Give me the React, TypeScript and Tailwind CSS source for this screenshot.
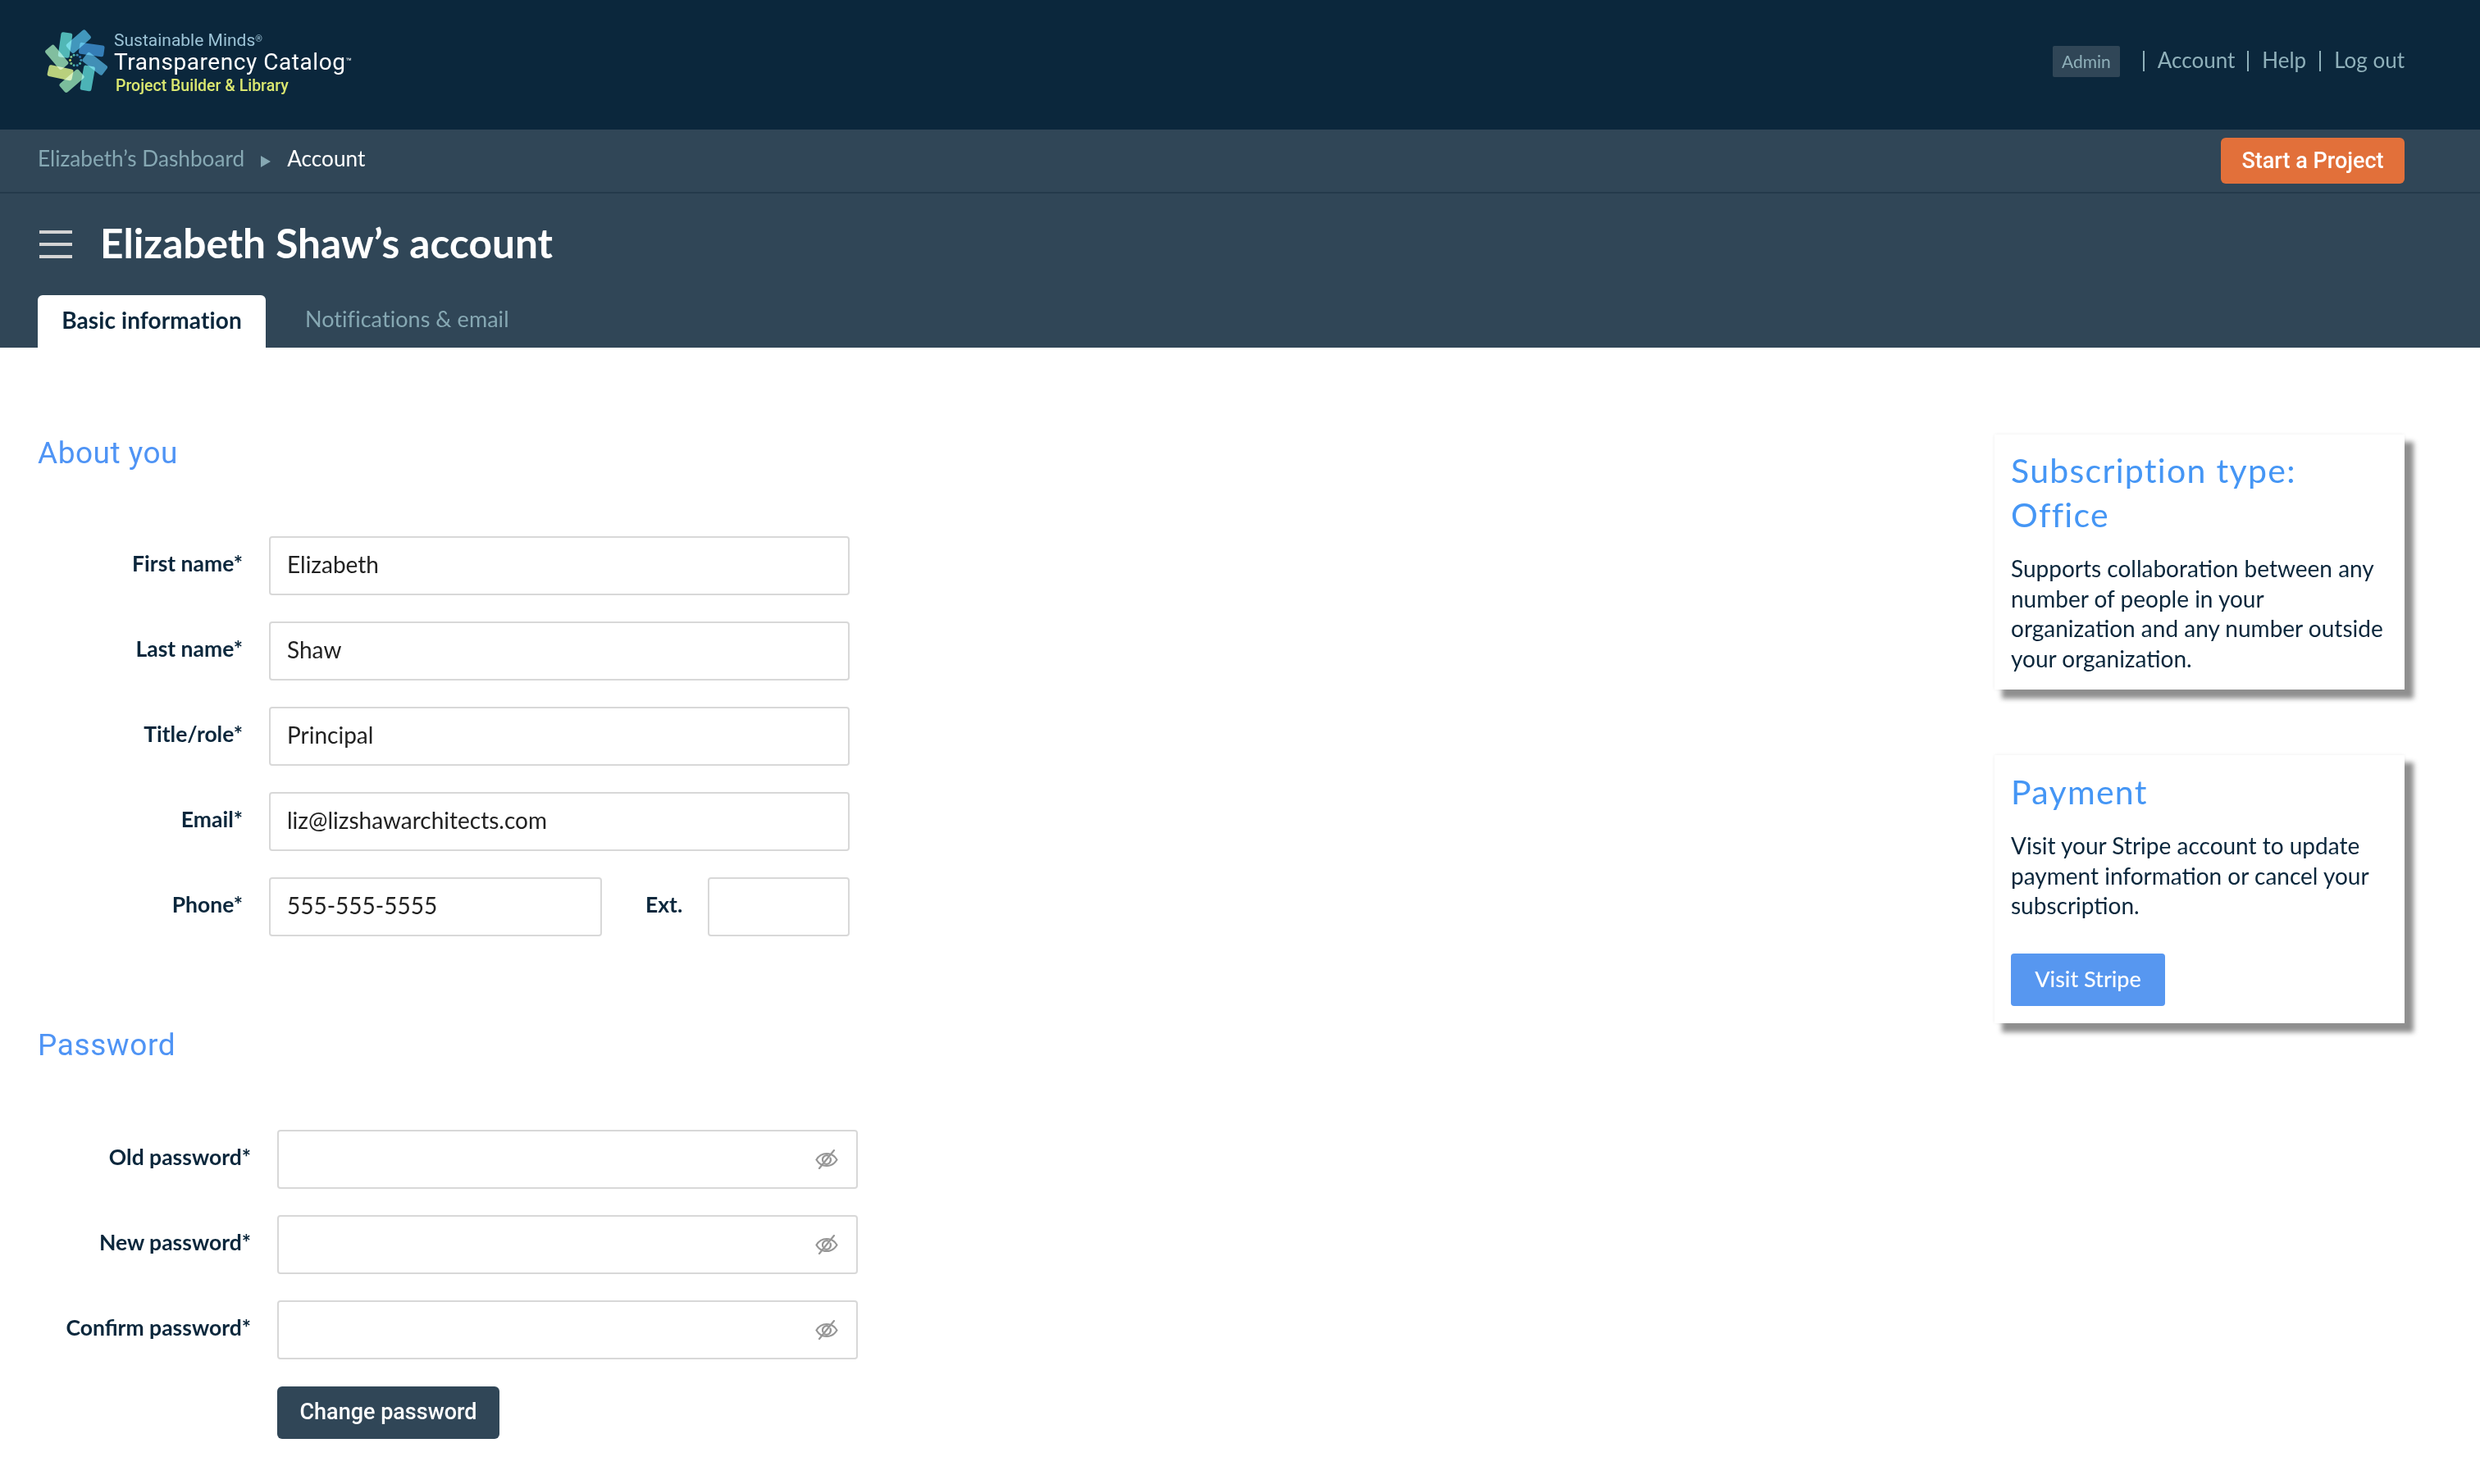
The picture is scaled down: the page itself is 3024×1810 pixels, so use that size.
import type { ReactNode } from 'react';

const petals = [
  { x: 143, y: 103, r: 8, fill: '#4fb8ad' },
  { x: 192, y: 90, r: 49, fill: '#3f8fb5' },
  { x: 240, y: 120, r: 98, fill: '#2f6fae' },
  { x: 252, y: 172, r: 128, fill: '#3d86ad' },
  { x: 225, y: 225, r: 10, fill: '#4ab3ae' },
  { x: 167, y: 235, r: 49, fill: '#7fc088' },
  { x: 125, y: 205, r: 102, fill: '#c6d95c' },
  { x: 112, y: 148, r: -40, fill: '#86c18c' },
];

const dots = ['#3f8fb5', '#4fb8ad', '#3f8fb5', '#4ab3ae', '#7fc088', '#c6d95c', '#86c18c', '#4fb8ad', '#3d86ad', '#2f6fae'];

function Logo() {
  return (
    <svg viewBox="60 40 250 250" className="h-[83px] w-[83px] shrink-0">
      {petals.map((p, i) => (
        <rect
          key={i}
          x={p.x - 21}
          y={p.y - 46}
          width={42}
          height={92}
          rx={8}
          fill={p.fill}
          fillOpacity={0.92}
          className="mix-blend-screen"
          transform={`rotate(${p.r} ${p.x} ${p.y})`}
        />
      ))}
      {dots.map((fill, i) => {
        const a = (i / dots.length) * Math.PI * 2;
        return <circle key={i} cx={181 + Math.cos(a) * 20} cy={159 + Math.sin(a) * 20} r={4.500} fill={fill} />;
      })}
    </svg>
  );
}

function EyeOff() {
  return (
    <svg viewBox="0 0 28 24" className="h-[24px] w-[28px]" fill="none" stroke="#969696" strokeWidth="2.2" strokeLinecap="round">
      <path d="M1.500 12.500C4.500 7.500 9 5 14 5s9.500 2.500 12.500 7.500C23.500 17.500 19 20 14 20S4.500 17.500 1.500 12.500Z" />
      <path d="M9.500 14.500a5.200 5.200 0 0 1 6.500-7M18.500 10.500a5.200 5.200 0 0 1-6.500 7" />
      <path d="M23 1 5 23" />
    </svg>
  );
}

function Label({ children, width }: { children: ReactNode; width: string }) {
  return (
    <label className={`${width} shrink-0 pb-[6px] text-right text-[26.500px] leading-[30px] font-bold text-[#0b273c]`}>
      {children}
    </label>
  );
}

function TextRow({ label, value }: { label: string; value: string }) {
  return (
    <div className="flex items-center gap-[32px]">
      <Label width="w-[296px]">{label}</Label>
      <input
        readOnly
        value={value}
        className="h-[72px] w-[708px] rounded-[4px] border-2 border-[#d8d8d8] px-[20px] pb-[5px] text-[28px] text-[#222] outline-none"
      />
    </div>
  );
}

function PasswordRow({ label }: { label: string }) {
  return (
    <div className="flex items-center gap-[32px]">
      <Label width="w-[306px]">{label}</Label>
      <div className="flex h-[72px] w-[708px] items-center justify-end rounded-[4px] border-2 border-[#d8d8d8] pr-[22px]">
        <EyeOff />
      </div>
    </div>
  );
}

export default function App() {
  return (
    <div className="min-h-[1810px] bg-white [font-family:Lato,sans-serif] text-[#0b273c]">
      <header className="flex h-[158px] items-start justify-between bg-[#0b273c] pr-[92px] pl-[52px]">
        <div className="flex items-start gap-[4px] pt-[34px]">
          <Logo />
          <div className="pt-[3px] [font-family:Roboto,sans-serif]">
            <div className="text-[21px] leading-[24px] text-[#9cc3d6]">
              Sustainable Minds<sup className="text-[11px]">®</sup>
            </div>
            <div className="text-[28px] leading-[30px] tracking-[0.55px] text-white">
              Transparency Catalog<sup className="text-[12px]">™</sup>
            </div>
            <div className="pl-[2px] text-[19.500px] leading-[27px] font-medium text-[#dbe870]">Project Builder &amp; Library</div>
          </div>
        </div>
        <nav className="flex items-center pt-[54px] text-[26px] text-[#8fb0ba]">
          <span className="flex h-[38px] w-[82px] items-center justify-center rounded-[2px] bg-[#304657] text-[21px]">Admin</span>
          <span className="ml-[28px] h-[25px] w-[2px] bg-[#8fb0ba]" />
          <span className="ml-[16px] pb-[2px]">Account</span>
          <span className="ml-[15px] h-[25px] w-[2px] bg-[#8fb0ba]" />
          <span className="ml-[16px] pb-[2px]">Help</span>
          <span className="ml-[16px] h-[25px] w-[2px] bg-[#8fb0ba]" />
          <span className="ml-[16px] pb-[2px]">Log out</span>
        </nav>
      </header>

      <div className="h-[266px] bg-[#304657]">
        <div className="flex h-[78px] items-center justify-between border-b-2 border-[#243a4b] pr-[92px] pl-[46px]">
          <div className="flex items-center pb-[5px] text-[26.200px] text-[#86a8b3]">
            Elizabeth’s Dashboard
            <span className="mt-[8px] mr-[20px] ml-[20px] h-0 w-0 border-y-[7px] border-l-[12px] border-y-transparent border-l-[#86a8b3]" />
            <span className="text-white">Account</span>
          </div>
          <button className="h-[56px] w-[224px] rounded-[6px] bg-[#e2703a] text-[27px] font-medium text-white [font-family:Roboto,sans-serif]">
            Start a Project
          </button>
        </div>
        <div className="flex items-center pt-[45px] pl-[48px]">
          <div className="flex w-[40px] flex-col gap-[11px]">
            <span className="h-[4px] bg-[#d4d4d4]" />
            <span className="h-[4px] bg-[#d4d4d4]" />
            <span className="h-[4px] bg-[#d4d4d4]" />
          </div>
          <h1 className="ml-[34px] pb-[4px] text-[49.600px] leading-[30px] font-bold text-white">Elizabeth Shaw’s account</h1>
        </div>
        <div className="mt-[45px] flex pl-[46px]">
          <div className="flex h-[64px] w-[278px] items-center justify-center rounded-t-[6px] bg-white pb-[5px] text-[28px] font-bold tracking-[0.1px] text-[#0b273c]">
            Basic information
          </div>
          <div className="flex h-[64px] items-center pb-[5px] pl-[48px] text-[27px] tracking-[0.05px] text-[#86a8b3]">Notifications &amp; email</div>
        </div>
      </div>

      <main className="flex justify-between pr-[92px]">
        <div>
          <h2 className="mt-[99px] ml-[46px] text-[37px] leading-[60px] tracking-[0.5px] text-[#4f94f5] [font-family:Roboto,sans-serif]">About you</h2>
          <div className="mt-[71px] flex flex-col gap-[32px]">
            <TextRow label="First name*" value="Elizabeth" />
            <TextRow label="Last name*" value="Shaw" />
            <TextRow label="Title/role*" value="Principal" />
            <TextRow label="Email*" value="liz@lizshawarchitects.com" />
            <div className="flex items-center gap-[32px]">
              <Label width="w-[296px]">Phone*</Label>
              <input
                readOnly
                value="555-555-5555"
                className="h-[72px] w-[406px] rounded-[4px] border-2 border-[#d8d8d8] px-[20px] pb-[5px] text-[28px] text-[#222] outline-none"
              />
              <Label width="ml-[21px] w-[44px]">Ext.</Label>
              <input readOnly className="h-[72px] w-[173px] rounded-[4px] border-2 border-[#d8d8d8] outline-none" />
            </div>
          </div>

          <h2 className="mt-[103px] ml-[46px] text-[37px] leading-[60px] tracking-[0.6px] text-[#4f94f5] [font-family:Roboto,sans-serif]">Password</h2>
          <div className="mt-[73px] flex flex-col gap-[32px]">
            <PasswordRow label="Old password*" />
            <PasswordRow label="New password*" />
            <PasswordRow label="Confirm password*" />
          </div>
          <button className="mt-[33px] ml-[338px] h-[64px] w-[271px] rounded-[6px] bg-[#304657] pb-[2px] text-[27px] font-medium text-white [font-family:Roboto,sans-serif]">
            Change password
          </button>
        </div>

        <aside className="mt-[106px] w-[500px]">
          <section className="h-[311px] bg-white px-[20px] pt-[17px] shadow-[10px_10px_6px_1px_#8f8f8f,0_0_4px_#eeeeee]">
            <h3 className="text-[41px] leading-[54px] tracking-[1.300px] text-[#4596f5]">
              Subscription type:
              <br />
              Office
            </h3>
            <p className="mt-[20px] text-[28px] leading-[36.500px] text-[#0b273c]">
              Supports collaboration between any number of people in your organization and any number outside your organization.
            </p>
          </section>
          <section className="mt-[80px] h-[327px] bg-white px-[20px] pt-[18px] shadow-[10px_10px_6px_1px_#8f8f8f,0_0_4px_#eeeeee]">
            <h3 className="text-[41px] leading-[54px] tracking-[1.300px] text-[#4596f5]">Payment</h3>
            <p className="mt-[20px] text-[28px] leading-[36.500px] text-[#0b273c]">
              Visit your Stripe account to update payment information or cancel your subscription.
            </p>
            <button className="mt-[40px] h-[64px] w-[188px] rounded-[4px] bg-[#5797f0] text-[27px] font-medium text-white">Visit Stripe</button>
          </section>
        </aside>
      </main>
    </div>
  );
}
